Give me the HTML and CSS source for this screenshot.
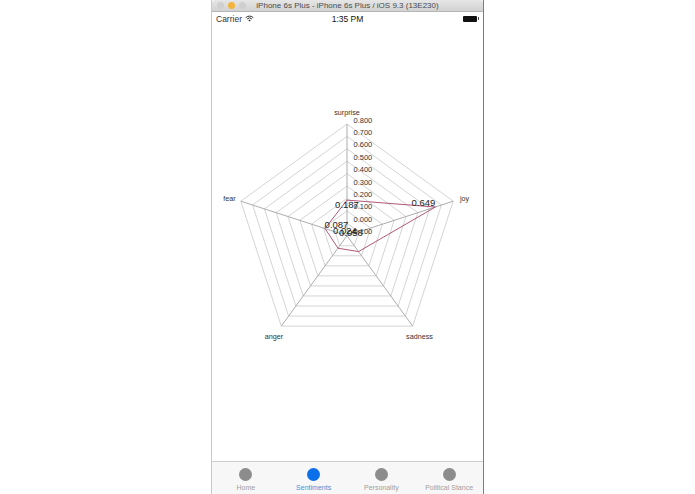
FILE: index.html
```html
<!DOCTYPE html>
<html lang="en">
<head>
<meta charset="utf-8">
<title>Sentiments</title>
<link rel="stylesheet" href="styles.css">
</head>
<body>
<main class="window">
  <header class="titlebar">
    <div class="lights"><span class="light"></span><span class="light light-on"></span><span class="light"></span></div>
    <div class="title">iPhone 6s Plus - iPhone 6s Plus / iOS 9.3 (13E230)</div>
  </header>
  <div class="statusbar">
    <div class="carrier">Carrier
      <svg class="wifi" viewBox="0 0 12 9" width="9" height="7"><path d="M1 3.4a7 7 0 0 1 10 0M2.8 5.2a4.5 4.5 0 0 1 6.4 0" fill="none" stroke="#222" stroke-width="1.3"/><path d="M6 8.6 4.4 6.8a2.3 2.3 0 0 1 3.2 0z" fill="#222"/></svg>
    </div>
    <div class="clock">1:35 PM</div>
    <div class="battery"><span class="battery-body"></span><span class="battery-tip"></span></div>
  </div>
  <div class="content">
    <svg class="chart" viewBox="211 25 272 436" width="272" height="436">
      <defs>
        <polygon id="ring" class="ring-shape" points="0,-111.7 106.2,-34.5 65.7,90.4 -65.7,90.4 -106.2,-34.5"/>
      </defs>
      <g transform="translate(347 235.7)">
        <g class="rings">
          <use href="#ring" transform="scale(.1111)"/>
          <use href="#ring" transform="scale(.2222)"/>
          <use href="#ring" transform="scale(.3333)"/>
          <use href="#ring" transform="scale(.4444)"/>
          <use href="#ring" transform="scale(.5556)"/>
          <use href="#ring" transform="scale(.6667)"/>
          <use href="#ring" transform="scale(.7778)"/>
          <use href="#ring" transform="scale(.8889)"/>
          <use href="#ring"/>
        </g>
        <g class="spokes">
          <line x1="0" y1="0" x2="0" y2="-111.7"/>
          <line x1="0" y1="0" x2="106.2" y2="-34.5"/>
          <line x1="0" y1="0" x2="65.7" y2="90.4"/>
          <line x1="0" y1="0" x2="-65.7" y2="90.4"/>
          <line x1="0" y1="0" x2="-106.2" y2="-34.5"/>
        </g>
        <polygon class="series" points="0,-35.6 88.4,-28.7 11.5,15.9 -9,12.5 -22,-7.2"/>
      </g>
      <g class="axis-labels">
        <text x="353.5" y="122.5">0.800</text>
        <text x="353.5" y="135">0.700</text>
        <text x="353.5" y="147.4">0.600</text>
        <text x="353.5" y="159.8">0.500</text>
        <text x="353.5" y="172.2">0.400</text>
        <text x="353.5" y="184.6">0.300</text>
        <text x="353.5" y="197">0.200</text>
        <text x="353.5" y="209.4">0.100</text>
        <text x="353.5" y="221.8">0.000</text>
        <text x="351" y="234.2">-0.100</text>
      </g>
      <g class="category-labels">
        <text x="347" y="115">surprise</text>
        <text x="464.5" y="200.5">joy</text>
        <text x="419.5" y="338.5">sadness</text>
        <text x="274" y="338.5">anger</text>
        <text x="229.5" y="200.5">fear</text>
      </g>
      <g class="value-labels">
        <text x="347" y="207.5">0.187</text>
        <text x="423.5" y="206">0.649</text>
        <text x="351" y="236">0.058</text>
        <text x="345" y="234">0.024</text>
        <text x="336.5" y="228">0.087</text>
      </g>
    </svg>
  </div>
  <nav class="tabbar">
    <div class="tab"><span class="tab-icon"></span><span class="tab-label">Home</span></div>
    <div class="tab tab-active"><span class="tab-icon"></span><span class="tab-label">Sentiments</span></div>
    <div class="tab"><span class="tab-icon"></span><span class="tab-label">Personality</span></div>
    <div class="tab"><span class="tab-icon"></span><span class="tab-label">Political Stance</span></div>
  </nav>
</main>
</body>
</html>
```
FILE: styles.css
```css
html, body {
  margin: 0;
  height: 100%;
  background: #fff;
  overflow: hidden;
}
body {
  font-family: "Liberation Sans", Arial, sans-serif;
  color: #222;
}
.window {
  box-sizing: border-box;
  width: 273px;
  height: 494px;
  margin-left: 211px;
  display: flex;
  flex-direction: column;
  border-left: 1px solid #c8c8c8;
  border-right: 1px solid #7c7c7c;
}
.titlebar {
  flex: 0 0 12px;
  position: relative;
  display: flex;
  align-items: center;
  justify-content: center;
  background: linear-gradient(#e6e6e6, #d2d2d2);
  border-bottom: 1px solid #b5b5b5;
  border-radius: 3px 3px 0 0;
  box-sizing: border-box;
}
.lights {
  position: absolute;
  left: 5px;
  top: 2px;
  display: flex;
  gap: 4px;
}
.light {
  width: 7px;
  height: 7px;
  border-radius: 50%;
  background: #cfcfcf;
}
.light-on {
  background: #f3b43c;
}
.title {
  font-size: 8px;
  color: #4a4a4a;
  white-space: nowrap;
}
.statusbar {
  flex: 0 0 13px;
  display: grid;
  grid-template-columns: 1fr auto 1fr;
  align-items: center;
  padding: 0 4px;
  font-size: 8px;
  color: #222;
}
.carrier {
  display: flex;
  align-items: center;
  gap: 3px;
  color: #333;
  font-size: 8.5px;
}
.clock {
  font-size: 8.5px;
  color: #111;
  padding-top: 1px;
}
.battery {
  justify-self: end;
  display: flex;
  align-items: center;
}
.battery-body {
  width: 14px;
  height: 6px;
  background: #111;
  border-radius: 1px;
}
.battery-tip {
  width: 1px;
  height: 3px;
  background: #555;
  margin-left: 1px;
}
.content {
  flex: 1 1 auto;
  min-height: 0;
}
.chart {
  display: block;
  margin-left: -1px;
}
.ring-shape {
  vector-effect: non-scaling-stroke;
}
.rings {
  fill: none;
  stroke: #d4d4d4;
  stroke-width: 1;
}
.spokes line {
  stroke: #adadad;
  stroke-width: 1;
}
.series {
  fill: none;
  stroke: #a8446a;
  stroke-width: 0.9;
}
.axis-labels text {
  font-size: 7.5px;
  fill: #333;
}
.category-labels text {
  font-size: 7.2px;
  fill: #333;
  text-anchor: middle;
}
.value-labels text {
  font-size: 9.5px;
  fill: #222;
  text-anchor: middle;
}
.tabbar {
  flex: 0 0 33px;
  box-sizing: border-box;
  display: grid;
  grid-template-columns: repeat(4, 1fr);
  background: #f7f7f7;
  border-top: 1px solid #cfcfcf;
  padding: 6px 0 0;
}
.tab {
  display: flex;
  flex-direction: column;
  align-items: center;
  gap: 2px;
  color: #a0a0a0;
  min-width: 0;
}
.tab-icon {
  width: 13px;
  height: 13px;
  border-radius: 50%;
  background: #8c8c8c;
}
.tab-label {
  font-size: 7px;
  line-height: 9px;
  white-space: nowrap;
}
.tab-active {
  color: #4a90d6;
}
.tab-active .tab-icon {
  background: #0a6fe8;
}
```
